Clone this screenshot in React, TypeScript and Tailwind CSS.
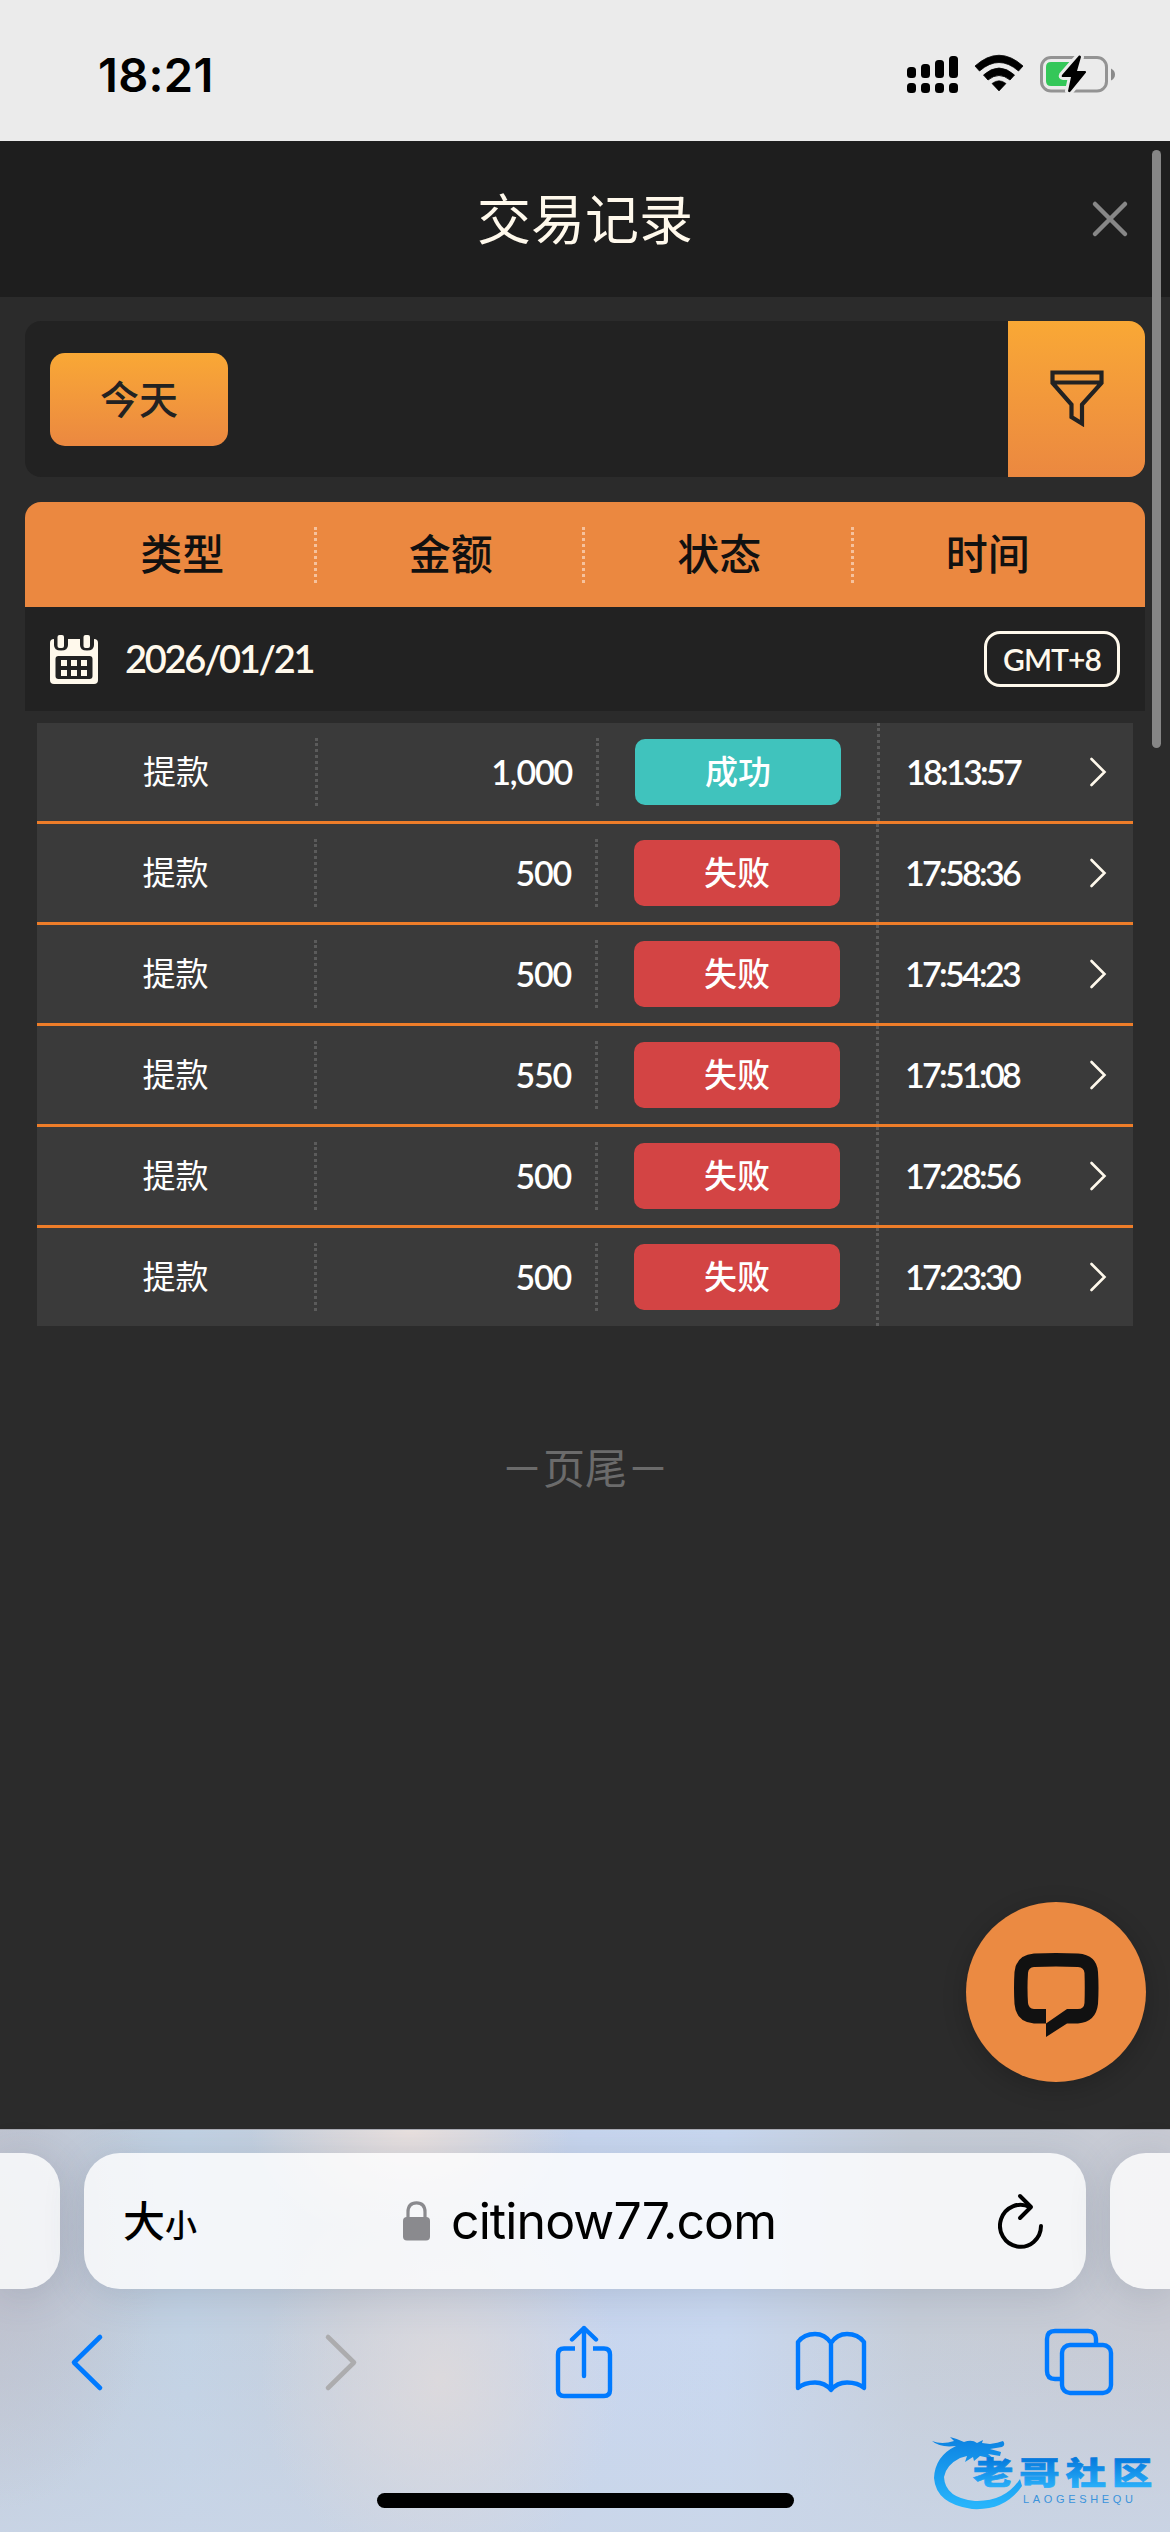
type RecordItem = {
  type: string;
  amount: string;
  success: boolean;
  time: string;
};

const records: RecordItem[] = [
  { type: "提款", amount: "1,000", success: true, time: "18:13:57" },
  { type: "提款", amount: "500", success: false, time: "17:58:36" },
  { type: "提款", amount: "500", success: false, time: "17:54:23" },
  { type: "提款", amount: "550", success: false, time: "17:51:08" },
  { type: "提款", amount: "500", success: false, time: "17:28:56" },
  { type: "提款", amount: "500", success: false, time: "17:23:30" },
];

const columns = ["类型", "金额", "状态", "时间"];

function StatusBar() {
  return (
    <div className="flex h-[141px] shrink-0 items-center justify-between bg-[#ebebeb] pr-[50px] pl-[98px]">
      <span className="mt-2 font-['Inter',sans-serif] text-[47px] leading-none font-semibold tracking-[0.3px] text-black">
        18:21
      </span>
      <svg className="mt-[9px]" width="220" height="50" viewBox="900 50 220 50">
        <rect x="907" y="67" width="9" height="11" rx="3.5" />
        <rect x="921" y="64" width="9" height="14" rx="3.5" />
        <rect x="935" y="60" width="9" height="18" rx="3.5" />
        <rect x="949" y="56" width="9" height="22" rx="3.5" />
        {[907, 921, 935, 949].map((x) => (
          <rect key={x} x={x} y="83" width="9" height="10" rx="3.5" />
        ))}
        <path d="M975 66Q999 44.500 1023 66L1018.500 71Q999 54 979.500 71Z" stroke="#000" strokeWidth="0.800" strokeLinejoin="round" />
        <path d="M983.500 75Q999 61 1014.500 75L1010 80Q999 71 988 80Z" stroke="#000" strokeWidth="0.800" strokeLinejoin="round" />
        <path d="M992 83.500Q999 78 1006 83.500L999 91Z" stroke="#000" strokeWidth="0.600" strokeLinejoin="round" />
        <rect x="1041.500" y="57.500" width="65" height="33.500" rx="9.500" fill="none" stroke="#939393" strokeWidth="3" />
        <path d="M1111 68.500Q1115 70.500 1115 74.500Q1115 78.500 1111 80.500Z" fill="#8a8a8a" />
        <path d="M1051 62H1070V86H1051Q1046 86 1046 81V67Q1046 62 1051 62Z" fill="#34c759" />
        <path
          d="M1079 55.500L1062 75Q1061 77 1063 77H1071L1068 91Q1068.500 93 1070.500 91.500L1086 72.500Q1086.500 71 1085 71H1077L1081 57Q1081 55 1079 55.500Z"
          stroke="#ebebeb"
          strokeWidth="6"
          paintOrder="stroke"
        />
      </svg>
    </div>
  );
}

function TitleBar() {
  return (
    <header className="grid h-[156px] shrink-0 grid-cols-[1fr_auto_1fr] items-center bg-[#1e1e1e] text-[54px] leading-none text-[#fff9ec]">
      <span />
      <h1 className="-mt-1">交易记录</h1>
      <svg className="mr-[40px] justify-self-end" width="40" height="40" viewBox="0 0 40 40" fill="none" stroke="#878787" strokeWidth="4.500" strokeLinecap="round">
        <path d="M5 5L35 35M35 5L5 35" />
      </svg>
    </header>
  );
}

function FilterBar() {
  return (
    <section className="flex h-[156px] overflow-hidden rounded-[16px] bg-[#222222]">
      <div className="flex flex-1 items-center pl-[25px]">
        <button className="h-[93px] w-[178px] rounded-[15px] bg-linear-to-b from-[#f9a835] to-[#eb8840] pb-1 text-[39px] leading-none font-medium text-[#222222]">
          今天
        </button>
      </div>
      <button className="grid w-[137px] place-items-center bg-linear-to-b from-[#f9a835] to-[#eb8840]" aria-label="筛选">
        <svg width="54" height="58" viewBox="0 0 54 58" fill="none" stroke="#222222" strokeWidth="4.200">
          <path d="M2.500 2.500H51.500V13L32 34.500V53.500L21.500 47V34.500L2.500 13ZM2.500 12.500H51.500" />
        </svg>
      </button>
    </section>
  );
}

function CalendarIcon() {
  return (
    <svg width="48" height="49" viewBox="0 0 48 49">
      <path d="M4 4H44Q48 4 48 8V45Q48 49 44 49H4Q0 49 0 45V8Q0 4 4 4Z" fill="#fff9ec" />
      <path d="M4 0H18V10Q18 15.500 11 15.500Q4 15.500 4 10ZM30 0H44V10Q44 15.500 37 15.500Q30 15.500 30 10Z" fill="#222222" />
      <rect x="7.500" y="0" width="6.500" height="13" rx="2" fill="#fff9ec" />
      <rect x="33.500" y="0" width="6.500" height="13" rx="2" fill="#fff9ec" />
      <rect x="5.500" y="21" width="37" height="23" rx="3" fill="#222222" />
      {[11, 21, 31].map((x) => (
        <g key={x} fill="#fff9ec">
          <rect x={x} y="25" width="6" height="6" />
          <rect x={x} y="35" width="6" height="6" />
        </g>
      ))}
    </svg>
  );
}

function TableHead() {
  return (
    <>
      <div className="mt-[25px] flex h-[105px] items-center rounded-t-[16px] bg-[#eb8840] px-[23px] text-[42px] leading-none font-medium text-[#111111]">
        {columns.map((name) => (
          <div
            key={name}
            className="flex h-[56px] flex-1 items-center justify-center border-r-3 border-dotted border-[#f6c29d] pb-[5px] pl-[3px] last:border-r-transparent"
          >
            {name}
          </div>
        ))}
      </div>
      <div className="flex h-[104px] items-center bg-[#222222] px-[25px] font-['Lato',sans-serif] font-semibold text-[#fff9ec]">
        <CalendarIcon />
        <span className="-mt-[3px] ml-[27px] text-[38px] leading-none tracking-[-2.3px]">2026/01/21</span>
        <span className="ml-auto flex h-[56px] w-[136px] items-center justify-center rounded-[16px] border-3 border-[#fff9ec] text-[30px] leading-none tracking-[-0.9px]">
          GMT+8
        </span>
      </div>
    </>
  );
}

function RecordRow({ item }: { item: RecordItem }) {
  return (
    <li
      className={`grid h-[101px] items-center border-b-3 border-[#ee7d29] bg-[#3a3a3a] text-[33px] leading-none text-white last:h-[98px] last:border-b-0 ${
        item.success ? "grid-cols-[281px_281px_281px_1fr]" : "grid-cols-[280px_281px_281px_1fr]"
      }`}
    >
      <div className="flex h-[68px] items-center justify-center border-r-3 border-dotted border-[#5b5b5b] pb-[3px]">{item.type}</div>
      <div className="flex h-[68px] items-center justify-end border-r-3 border-dotted border-[#5b5b5b] pr-[24px] font-['Lato',sans-serif] text-[34px] font-semibold tracking-[-1.2px]">
        {item.amount}
      </div>
      <div className="flex h-full items-center justify-center border-r-3 border-dotted border-[#5b5b5b]">
        <span
          className={`flex h-[66px] w-[206px] items-center justify-center rounded-[10px] pb-[3px] font-medium ${
            item.success ? "bg-[#40c3bd]" : "bg-[#d34444]"
          }`}
        >
          {item.success ? "成功" : "失败"}
        </span>
      </div>
      <div className="flex h-full items-center justify-between pr-[26px] pl-[26px]">
        <span className="font-['Lato',sans-serif] text-[34px] font-semibold tracking-[-2.7px]">{item.time}</span>
        <svg width="18" height="30" viewBox="0 0 18 30" fill="none" stroke="#fff9ec" strokeWidth="2.600" strokeLinecap="round">
          <path d="M2.500 2L15.500 15L2.500 28" />
        </svg>
      </div>
    </li>
  );
}

function ChatButton() {
  return (
    <button
      className="absolute top-[1902px] left-[966px] size-[180px] rounded-full bg-[#eb8a42] shadow-[0_6px_24px_rgba(0,0,0,0.2)]"
      aria-label="客服"
    >
      <svg width="180" height="180" viewBox="0 0 180 180" fill="#111111">
        <path d="M68 51.500Q90 50.500 112 51.500Q131 53 132 70Q133 86 132 102Q130 120 112 121.500H101L80 135V107H68Q62.500 106.500 62 101Q61 86 62 71Q62.500 65.500 68 65Q90 64 112 65Q118 65.500 118.500 71Q119 86 118.500 101Q118 107 112 107H101L80 121.500H68Q50 120 48.500 102Q47.500 86 48.500 70Q50 53 68 51.500Z" fillRule="evenodd" />
      </svg>
    </button>
  );
}

function Watermark() {
  return (
    <svg className="absolute top-[2425px] left-[920px]" width="240" height="90" viewBox="0 0 240 90">
      <defs>
        <linearGradient id="dragon" x1="0" y1="8" x2="0" y2="80" gradientUnits="userSpaceOnUse">
          <stop offset="0" stopColor="#0a7fe0" />
          <stop offset="1" stopColor="#27b4fb" />
        </linearGradient>
        <linearGradient id="brand" x1="0" y1="0" x2="0" y2="1">
          <stop offset="0.250" stopColor="#067add" />
          <stop offset="0.850" stopColor="#27adf8" />
        </linearGradient>
      </defs>
      <path
        d="M12 16Q22 20 34 16L30 12Q38 14 44 17Q52 14 57 18L63 15L62 18L70 19Q78 18 83 16Q86 20 82 22L70 24L81 27L80 31L68 29L74 34L60 31L54 36L53 32L45 37L47 31L40 33Q26 40 24 52Q25 73 55 76Q85 77 100 54L102 61Q85 86 52 84Q16 79 14 53Q15 31 36 21Q20 23 12 16Z"
        fill="url(#dragon)"
      />
      <g fill="url(#brand)" fontFamily="'Noto Sans CJK SC', sans-serif">
        <text
          transform="translate(53 59) scale(1.300 1)"
          fontSize="31"
          fontWeight="900"
          textLength="138"
          stroke="url(#brand)"
          strokeWidth="0.700"
        >
          老哥社区
        </text>
      </g>
      <text x="103" y="78" fontFamily="'Liberation Sans', sans-serif" fontSize="11" fill="#3a93dc" textLength="110">
        LAOGESHEQU
      </text>
    </svg>
  );
}

function BrowserBar() {
  return (
    <footer className="mt-auto flex h-[403px] shrink-0 flex-col border-t border-[#a9abb3] bg-[radial-gradient(ellipse_180px_200px_at_440px_250px,rgba(222,218,220,0.9),transparent),radial-gradient(ellipse_160px_110px_at_410px_0px,rgba(234,225,223,1),transparent),radial-gradient(ellipse_160px_260px_at_0px_120px,rgba(190,190,203,0.8),transparent),linear-gradient(to_top,rgba(202,214,232,0.8),transparent_50%),linear-gradient(to_right,#c1cad6,#c2d2e4_16%,#c6cedb_30%,#c8d6ef_50%,#c9d8f0_62%,#c6cdd8_78%,#c8cad3)]">
      <div className="mt-[23px] flex h-[136px] gap-6">
        <div className="w-[60px] rounded-r-[36px] bg-white/80 shadow-[0_6px_40px_rgba(60,80,100,0.18)]" />
        <div className="flex flex-1 items-center rounded-[36px] bg-white/80 pr-[42px] pl-[39px] text-black shadow-[0_6px_40px_rgba(60,80,100,0.18)]">
          <div className="-mt-1 flex w-[280px] items-baseline leading-none font-medium">
            <span className="text-[42px]">大</span>
            <span className="text-[32px]">小</span>
          </div>
          <svg width="27" height="40" viewBox="0 0 27 40">
            <path d="M5 19V11Q5 1.800 13.500 1.800Q22 1.800 22 11V19" fill="none" stroke="#8a8a8e" strokeWidth="3.200" />
            <rect y="16" width="27" height="23.500" rx="4" fill="#8a8a8e" />
          </svg>
          <span className="ml-[21px] font-['Inter',sans-serif] text-[50px] leading-none tracking-[-0.9px]">citinow77.com</span>
          <svg className="ml-auto" width="46" height="56" viewBox="0 0 46 56" fill="none" stroke="#000" strokeWidth="4" strokeLinecap="round" strokeLinejoin="round">
            <path d="M43 33A20.500 21 0 1 1 32 14.200" />
            <path d="M22 3L33 14L22 25" />
          </svg>
        </div>
        <div className="w-[60px] rounded-l-[36px] bg-white/80 shadow-[0_6px_40px_rgba(60,80,100,0.18)]" />
      </div>
      <nav className="mt-[35px] flex h-[76px] items-center justify-between pr-[55px] pl-[51px] text-[#007aff]">
        <svg width="72" height="60" viewBox="-18 0 72 60" fill="none" stroke="currentColor" strokeWidth="4.600" strokeLinecap="round" strokeLinejoin="round">
          <path d="M31 5L5 30.500L31 56" />
        </svg>
        <svg width="72" height="60" viewBox="-24 0 72 60" fill="none" stroke="#acacae" strokeWidth="4.600" strokeLinecap="round" strokeLinejoin="round">
          <path d="M5 5L31 30.500L5 56" />
        </svg>
        <svg width="72" height="74" viewBox="-8 0 72 74" fill="none" stroke="currentColor" strokeWidth="4.400" strokeLinecap="round" strokeLinejoin="round">
          <path d="M20 23.500H9Q3 23.500 3 29.500V65Q3 71 9 71H49Q55 71 55 65V29.500Q55 23.500 49 23.500H38" strokeLinecap="butt" />
          <path d="M29 51V3M17 14.500L29 3L41 14.500" />
        </svg>
        <svg width="72" height="62" viewBox="0 0 72 62" fill="none" stroke="currentColor" strokeWidth="4.400" strokeLinecap="round" strokeLinejoin="round">
          <path d="M36 12Q30 3 20 3Q9 3 3 11V57Q9 51.500 20 51.500Q30 51.500 36 59Q42 51.500 52 51.500Q63 51.500 69 57V11Q63 3 52 3Q42 3 36 12ZM36 12V58" />
        </svg>
        <svg width="72" height="68" viewBox="-1 0 72 68" fill="none" stroke="currentColor" strokeWidth="4.400">
          <path d="M18 51H11Q3 51 3 43V11Q3 3 11 3H44Q52 3 52 11V17" />
          <rect x="18" y="17" width="49" height="48" rx="8" />
        </svg>
      </nav>
      <div className="mt-auto mb-6 h-[15px] w-[417px] self-center rounded-full bg-black" />
    </footer>
  );
}

export default function App() {
  return (
    <div className="relative flex h-[2532px] w-[1170px] flex-col overflow-hidden bg-[#2b2b2b] font-['Noto_Sans_CJK_SC',sans-serif]">
      <StatusBar />
      <TitleBar />
      <main className="px-[25px] pt-6">
        <FilterBar />
        <TableHead />
        <ul className="mx-3 mt-3">
          {records.map((item) => (
            <RecordRow key={item.time} item={item} />
          ))}
        </ul>
        <p className="mt-[119px] text-center text-[42px] leading-none text-[#6b6b6b]">－页尾－</p>
      </main>
      <BrowserBar />
      <div className="absolute top-[150px] left-[1152px] h-[598px] w-[9px] rounded-full bg-[#868686]" />
      <ChatButton />
      <Watermark />
    </div>
  );
}
